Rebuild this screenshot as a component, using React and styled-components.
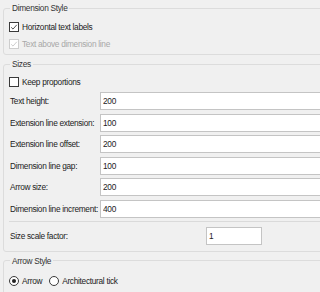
import styled, { createGlobalStyle } from "styled-components";

const GlobalStyle = createGlobalStyle`
  html, body {
    margin: 0;
    padding: 0;
    background: #f0f0f0;
    overflow: hidden;
  }
  body {
    font-family: "Liberation Sans", Arial, sans-serif;
    font-size: 8.3px;
    letter-spacing: -0.3px;
    color: #222;
  }
`;

const Page = styled.div`
  width: 337px;
  padding: 2px 0 0 3px;
  display: flex;
  flex-direction: column;
  gap: 3px;
`;

const Group = styled.fieldset`
  margin: 0;
  padding: ${(p) => p.$pad};
  border: 1px solid #dcdcdc;
  border-radius: 3px;
  min-width: 0;
  display: flex;
  flex-direction: column;
`;

const Legend = styled.legend`
  padding: 0 2px;
  line-height: 12px;
  color: #333;
`;

const Check = styled.label`
  display: flex;
  align-items: center;
  gap: 3px;
  height: 17px;
  margin-left: -1px;
  color: ${(p) => (p.$disabled ? "#a8a8a8" : "#222")};
`;

const Box = styled.span`
  width: 10px;
  height: 10px;
  box-sizing: border-box;
  border: 1px solid ${(p) => (p.$disabled ? "#cdcdcd" : "#3a3a3a")};
  background: #fff;
  display: flex;
  align-items: center;
  justify-content: center;
`;

const Rows = styled.div`
  display: flex;
  flex-direction: column;
  gap: 3.6px;
  margin-top: 2px;
`;

const Field = styled.div`
  display: flex;
  align-items: center;
  height: 18px;
  margin-top: ${(p) => p.$top || 0}px;
`;

const Label = styled.span`
  flex: none;
  width: ${(p) => p.$w}px;
`;

const Input = styled.input`
  box-sizing: border-box;
  height: 18px;
  flex: ${(p) => (p.$w ? "none" : "1")};
  width: ${(p) => (p.$w ? `${p.$w}px` : "auto")};
  min-width: 0;
  margin: 0;
  padding: 0 2px;
  border: 1px solid #c4c4c4;
  background: #fff;
  font: inherit;
  letter-spacing: inherit;
  color: #222;
  outline: none;
`;

const Separator = styled.div`
  height: 0;
  border-top: 1px solid #dadada;
  margin: 3px 0 0 -1px;
`;

const RadioRow = styled.div`
  display: flex;
  align-items: center;
  gap: 7px;
  height: 17px;
  margin-left: -1px;
`;

const Radio = styled.label`
  display: flex;
  align-items: center;
  gap: 3px;
`;

const Circle = styled.span`
  width: 10px;
  height: 10px;
  box-sizing: border-box;
  border: 1px solid #3a3a3a;
  border-radius: 50%;
  background: #fff;
  display: flex;
  align-items: center;
  justify-content: center;

  &::after {
    content: "";
    width: 4px;
    height: 4px;
    border-radius: 50%;
    background: ${(p) => (p.$on ? "#222" : "transparent")};
  }
`;

const Tick = ({ color }) => (
  <svg width="8" height="8" viewBox="0 0 8 8">
    <path d="M1.2 4.3 L3 6.1 L6.8 1.8" fill="none" stroke={color} strokeWidth="0.85" />
  </svg>
);

const CheckBox = ({ checked, disabled, children }) => (
  <Check $disabled={disabled}>
    <Box $disabled={disabled}>{checked && <Tick color={disabled ? "#c4c4c4" : "#333"} />}</Box>
    {children}
  </Check>
);

const sizes = [
  ["Text height:", "200"],
  ["Extension line extension:", "100"],
  ["Extension line offset:", "200"],
  ["Dimension line gap:", "100"],
  ["Arrow size:", "200"],
  ["Dimension line increment:", "400"],
];

export default function App() {
  return (
    <>
      <GlobalStyle />
      <Page>
        <Group $pad="4px 0 2px 6px">
          <Legend>Dimension Style</Legend>
          <CheckBox checked>Horizontal text labels</CheckBox>
          <CheckBox checked disabled>Text above dimension line</CheckBox>
        </Group>

        <Group $pad="3px 0 6px 6px">
          <Legend>Sizes</Legend>
          <CheckBox>Keep proportions</CheckBox>
          <Rows>
            {sizes.map(([label, value]) => (
              <Field key={label}>
                <Label $w={90}>{label}</Label>
                <Input defaultValue={value} />
              </Field>
            ))}
          </Rows>
          <Separator />
          <Field $top={5}>
            <Label $w={196}>Size scale factor:</Label>
            <Input $w={56} defaultValue="1" />
          </Field>
        </Group>

        <Group $pad="6px 0 8px 6px">
          <Legend>Arrow Style</Legend>
          <RadioRow>
            <Radio>
              <Circle $on />
              Arrow
            </Radio>
            <Radio>
              <Circle />
              Architectural tick
            </Radio>
          </RadioRow>
        </Group>
      </Page>
    </>
  );
}
